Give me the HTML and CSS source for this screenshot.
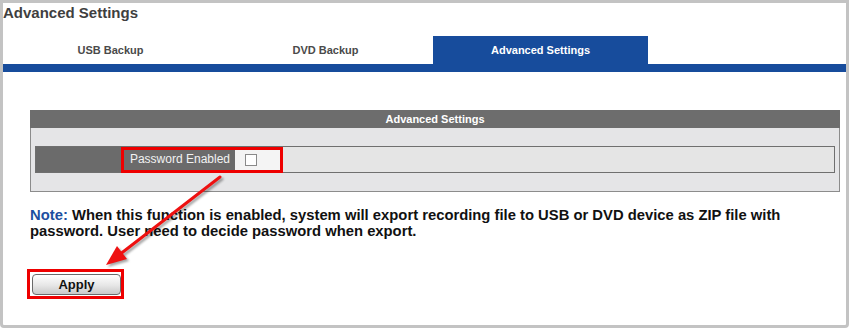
FILE: index.html
```html
<!DOCTYPE html>
<html lang="en">
<head>
  <meta charset="UTF-8">
  <title>Advanced Settings</title>
  <link rel="stylesheet" href="styles.css">
</head>
<body>

<div class="frame">
  <h1 class="page-title">Advanced Settings</h1>

  <nav class="tabs">
    <a class="tab">USB Backup</a>
    <a class="tab">DVD Backup</a>
    <a class="tab active">Advanced Settings</a>
  </nav>

  <div class="content">
    <div class="panel">
      <div class="panel-head">Advanced Settings</div>
      <div class="panel-body">
        <div class="field-row">
          <label class="field-label" for="pwd">Password Enabled</label>
          <div class="field-check"><input type="checkbox" id="pwd"></div>
          <span class="mark mark-row"></span>
        </div>
      </div>
    </div>

    <p class="note"><span class="note-tag">Note:</span> When this function is enabled, system will export recording file to USB or DVD device as ZIP file with password. User need to decide password when export.</p>

    <div class="actions">
      <span class="mark-btn"><button type="button" class="btn-apply">Apply</button></span>
    </div>
  </div>

  <svg class="arrow" width="849" height="328" viewBox="0 0 849 328">
    <line x1="220" y1="177" x2="119" y2="255" stroke="#ee1111" stroke-width="3" stroke-linecap="round"/>
    <polygon points="106,265 127,259 117,246" fill="#ee1111"/>
  </svg>
</div>

</body>
</html>
```

FILE: styles.css
```css
* {
  box-sizing: border-box;
}

body {
  margin: 0;
  font-family: 'Liberation Sans', Arial, sans-serif;
  background: #fff;
  color: #111;
}

.frame {
  position: relative;
  width: 849px;
  height: 328px;
  border: 3px solid #c3c3c3;
  border-radius: 0 0 4px 4px;
  background: #fff;
}

.page-title {
  margin: 1px 0 0 0;
  font-size: 15px;
  line-height: 18px;
  font-weight: bold;
  color: #3f3f3f;
}

.tabs {
  display: flex;
  margin-top: 14px;
  border-bottom: 8px solid #174c9c;
}

.tab {
  width: 215px;
  height: 28px;
  line-height: 28px;
  text-align: center;
  font-size: 11px;
  font-weight: bold;
  color: #4a4a4a;
}

.tab.active {
  background: #174c9c;
  color: #fff;
}

.content {
  padding: 38px 6px 0 27px;
}

.panel {
  width: 810px;
}

.panel-head {
  height: 18px;
  line-height: 18px;
  background: #6d6d6d;
  color: #fff;
  text-align: center;
  font-size: 11px;
  font-weight: bold;
}

.panel-body {
  background: #e5e5e7;
  border: 1px solid #8c8c8c;
  border-top: none;
  padding: 18px 4px;
}

.field-row {
  position: relative;
  display: flex;
  height: 27px;
  border: 1px solid #6f6f6f;
  background: #e5e5e5;
}

.field-label {
  width: 199px;
  background: #6b6b6b;
  color: #f2f2f2;
  font-size: 12px;
  line-height: 25px;
  text-align: right;
  padding-right: 5px;
}

.field-check {
  width: 48px;
  background: #f4f4f4;
  display: flex;
  align-items: center;
  padding-left: 10px;
}

.field-check input {
  appearance: none;
  -webkit-appearance: none;
  width: 12px;
  height: 12px;
  margin: 0;
  background: #fff;
  border: 1px solid #8a8a8a;
}

.mark-row {
  position: absolute;
  left: 85px;
  top: 0;
  width: 162px;
  height: 26px;
  border: 3px solid #ee0000;
}

.note {
  margin: 15px 0 0 0;
  max-width: 800px;
  font-size: 14.8px;
  line-height: 16px;
  font-weight: bold;
  color: #111;
}

.note-tag {
  color: #1c4fa0;
}

.actions {
  margin-top: 30px;
  margin-left: -3px;
}

.mark-btn {
  display: inline-block;
  border: 3px solid #ee0000;
  padding: 2px 0 1px 2px;
}

.btn-apply {
  display: block;
  width: 89px;
  height: 21px;
  padding: 0;
  border: 1px solid #6a6a6a;
  border-radius: 4px;
  background: linear-gradient(#ffffff, #e6e6e6 55%, #c9c9c9);
  font-family: 'Liberation Sans', Arial, sans-serif;
  font-size: 13px;
  font-weight: bold;
  color: #111;
}

.arrow {
  position: absolute;
  left: -3px;
  top: -3px;
  pointer-events: none;
  filter: drop-shadow(2px 2px 1px rgba(0, 0, 0, 0.35));
}
```
